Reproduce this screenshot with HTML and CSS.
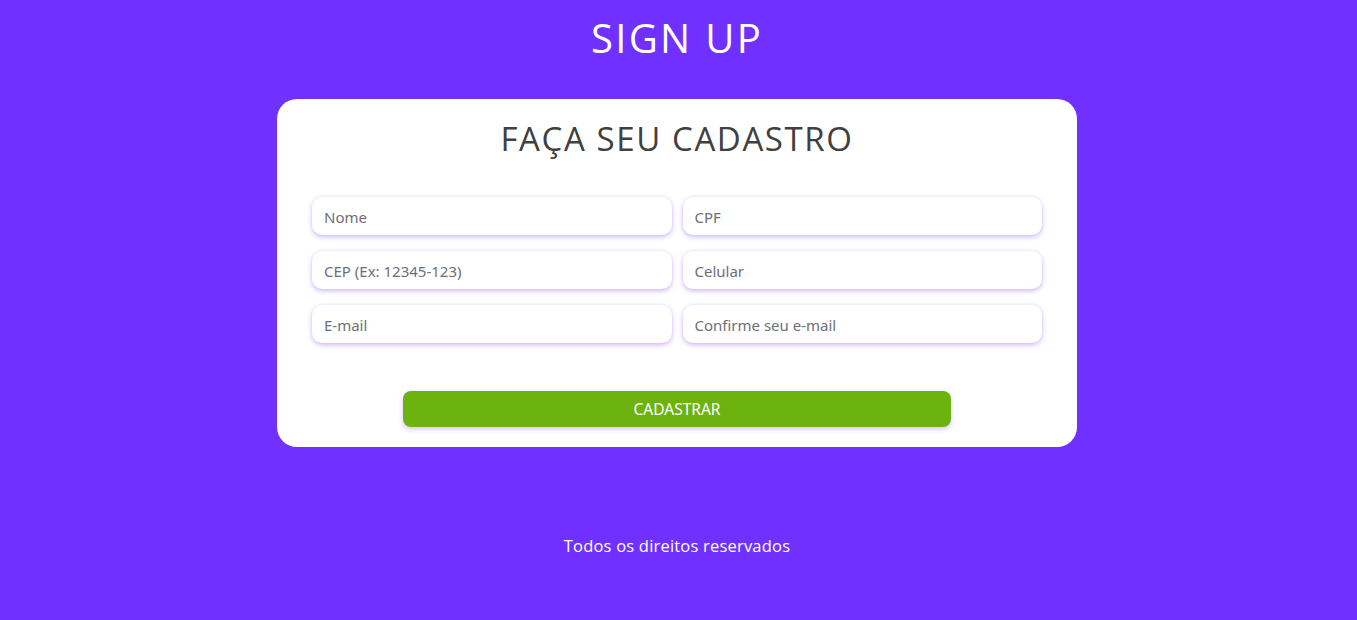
FILE: index.html
```html
<!DOCTYPE html>
<html lang="pt-BR">
<head>
<meta charset="utf-8">
<title>Sign Up</title>
<link rel="stylesheet" href="styles.css">
</head>
<body>
<header class="page-header">
  <h1 class="page-title">SIGN UP</h1>
</header>
<main class="card">
  <h2 class="card-title">FAÇA SEU CADASTRO</h2>
  <form class="form">
    <div class="grid">
      <input class="field" type="text" placeholder="Nome">
      <input class="field" type="text" placeholder="CPF">
      <input class="field" type="text" placeholder="CEP (Ex: 12345-123)">
      <input class="field" type="text" placeholder="Celular">
      <input class="field" type="email" placeholder="E-mail">
      <input class="field" type="email" placeholder="Confirme seu e-mail">
    </div>
    <button class="submit" type="button">CADASTRAR</button>
  </form>
</main>
<footer class="footer">Todos os direitos reservados</footer>
</body>
</html>
```
FILE: styles.css
```css
html, body {
  margin: 0;
  padding: 0;
}
body {
  background: #7030ff;
  font-family: "Open Sans", "Liberation Sans", sans-serif;
  min-height: 620px;
  padding-right: 3px;
}
.page-header {
  padding-top: 14px;
}
.page-title {
  margin: 0;
  text-align: center;
  color: #ffffff;
  font-family: "Open Sans", sans-serif;
  font-weight: 400;
  font-size: 40px;
  line-height: 48px;
  letter-spacing: 2.3px;
}
.card {
  width: 800px;
  box-sizing: border-box;
  margin: 37px auto 0;
  background: #ffffff;
  border-radius: 20px;
  padding: 20px 35px 20px;
}
.card-title {
  margin: 0;
  text-align: center;
  color: #404040;
  font-family: "Open Sans", sans-serif;
  font-weight: 400;
  font-size: 33px;
  line-height: 40px;
  letter-spacing: 1.6px;
}
.form {
  margin-top: 38px;
  display: flex;
  flex-direction: column;
  align-items: center;
}
.grid {
  width: 100%;
  display: grid;
  grid-template-columns: 1fr 1fr;
  grid-auto-rows: 38px;
  gap: 16px 11px;
}
.field {
  box-sizing: border-box;
  width: 100%;
  height: 38px;
  border: none;
  border-radius: 10px;
  background: #ffffff;
  padding: 2px 12px 0;
  font-family: "Noto Sans", "Open Sans", sans-serif;
  font-size: 15px;
  color: #333;
  box-shadow: 0 2px 5px rgba(112, 48, 255, 0.35), 0 -1px 3px rgba(112, 48, 255, 0.05);
  outline: none;
}
.field::placeholder {
  color: #6d6f78;
}
.submit {
  margin-top: 48px;
  width: 548px;
  height: 36px;
  border: none;
  border-radius: 8px;
  background: #6cb30f;
  color: #ffffff;
  font-family: "Noto Sans", "Open Sans", sans-serif;
  font-size: 15.5px;
  box-shadow: 0 2px 5px rgba(112, 48, 255, 0.3);
  cursor: pointer;
}
.footer {
  margin-top: 89px;
  text-align: center;
  color: #ffffff;
  font-family: "Open Sans", sans-serif;
  font-size: 16.5px;
  line-height: 20px;
  letter-spacing: 0.2px;
}
```
